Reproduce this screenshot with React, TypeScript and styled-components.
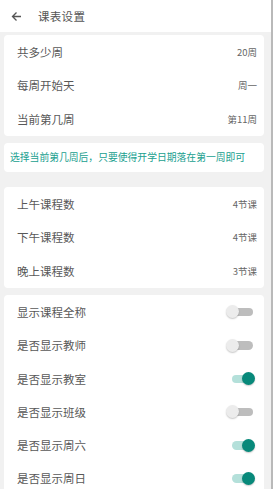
import * as React from 'react'
import styled, { createGlobalStyle } from 'styled-components'

const GlobalStyle = createGlobalStyle`
  html, body {
    margin: 0;
    padding: 0;
    background: #f1f1f1;
  }
  body {
    font-family: "Noto Sans CJK SC", "Noto Sans", sans-serif;
  }
`

const Page = styled.div`
  width: 273px;
  min-height: 489px;
  box-sizing: border-box;
  background: #f1f1f1;
  border-right: 2px solid #b9b9b9;
  padding-bottom: 12px;
`

const Header = styled.div`
  height: 32px;
  background: #fff;
  display: flex;
  align-items: center;
  padding-left: 11px;
  margin-bottom: 3px;
  svg {
    flex: none;
  }
`

const Title = styled.span`
  margin-left: 16px;
  font-size: 11.5px;
  color: #555;
  letter-spacing: 0.3px;
`

const Card = styled.div<{ $gap?: number }>`
  margin: ${p => p.$gap ?? 7}px 7px 0 4px;
  background: #fff;
  border-radius: 4px;
  padding: 0.5px 0;
`

const Row = styled.div`
  height: 33.3px;
  display: flex;
  align-items: center;
  justify-content: space-between;
  padding: 0 7px 0 13px;
`

const Label = styled.span`
  font-size: 11.5px;
  color: #585858;
`

const Value = styled.span`
  font-size: 9.5px;
  color: #666;
`

const Hint = styled.div`
  height: 28px;
  display: flex;
  align-items: center;
  padding-left: 6px;
  font-size: 9.8px;
  color: #20a08f;
`

const Switch = styled.div<{ $on: boolean }>`
  position: relative;
  width: 29px;
  height: 13px;
  margin-right: 2px;
  &::before {
    content: '';
    position: absolute;
    left: 6px;
    right: 2px;
    top: 2.5px;
    height: 8.5px;
    border-radius: 5px;
    background: ${p => (p.$on ? '#b4e0da' : '#bdbdbd')};
  }
  &::after {
    content: '';
    position: absolute;
    top: 0;
    left: ${p => (p.$on ? '16px' : '0')};
    width: 13px;
    height: 13px;
    border-radius: 50%;
    background: ${p => (p.$on ? '#07897a' : '#ececec')};
    box-shadow: 0 1px 1.5px rgba(0, 0, 0, 0.22);
  }
`

const general = [
  ['共多少周', '20周'],
  ['每周开始天', '周一'],
  ['当前第几周', '第11周'],
]

const lessons = [
  ['上午课程数', '4节课'],
  ['下午课程数', '4节课'],
  ['晚上课程数', '3节课'],
]

const toggles: [string, boolean][] = [
  ['显示课程全称', false],
  ['是否显示教师', false],
  ['是否显示教室', true],
  ['是否显示班级', false],
  ['是否显示周六', true],
  ['是否显示周日', true],
]

export default function App() {
  return (
    <Page>
      <GlobalStyle />
      <Header>
        <svg width="11" height="11" viewBox="0 0 11 11" fill="none" stroke="#555" strokeWidth="1.3">
          <path d="M10 5.5H1.5M5.5 1.5L1.5 5.5L5.5 9.5" />
        </svg>
        <Title>课表设置</Title>
      </Header>
      <Card $gap={0}>
        {general.map(([l, v]) => (
          <Row key={l}>
            <Label>{l}</Label>
            <Value>{v}</Value>
          </Row>
        ))}
      </Card>
      <Card>
        <Hint>选择当前第几周后，只要使得开学日期落在第一周即可</Hint>
      </Card>
      <Card $gap={15}>
        {lessons.map(([l, v]) => (
          <Row key={l}>
            <Label>{l}</Label>
            <Value>{v}</Value>
          </Row>
        ))}
      </Card>
      <Card>
        {toggles.map(([l, on]) => (
          <Row key={l}>
            <Label>{l}</Label>
            <Switch $on={on} />
          </Row>
        ))}
      </Card>
    </Page>
  )
}
